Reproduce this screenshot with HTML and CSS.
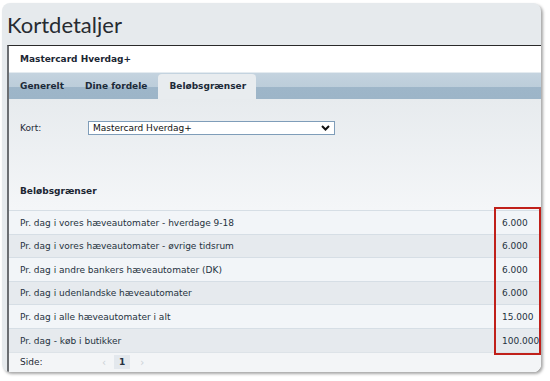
FILE: index.html
```html
<!DOCTYPE html>
<html lang="da">

<head>
    <meta charset="UTF-8" />
    <title>Kortdetaljer</title>
    <link rel="stylesheet" href="styles.css">
</head>

<body>
    <div class="panel">
        <h1 class="page-title">Kortdetaljer</h1>
        <div class="box">
            <div class="box-head">Mastercard Hverdag+</div>
            <ul class="tabs">
                <li>Generelt</li>
                <li>Dine fordele</li>
                <li class="active">Beløbsgrænser</li>
            </ul>
            <div class="content">
                <div class="form-row">
                    <label>Kort:</label>
                    <div class="select">
                        <span>Mastercard Hverdag+</span>
                        <svg width="9" height="6" viewBox="0 0 9 6">
                            <path d="M1 1 L4.5 4.5 L8 1" fill="none" stroke="#111" stroke-width="2" />
                        </svg>
                    </div>
                </div>
                <h3 class="section">Beløbsgrænser</h3>
                <div class="limits">
                    <table>
                        <tr><td>Pr. dag i vores hæveautomater - hverdage 9-18</td><td class="num">6.000</td></tr>
                        <tr><td>Pr. dag i vores hæveautomater - øvrige tidsrum</td><td class="num">6.000</td></tr>
                        <tr><td>Pr. dag i andre bankers hæveautomater (DK)</td><td class="num">6.000</td></tr>
                        <tr><td>Pr. dag i udenlandske hæveautomater</td><td class="num">6.000</td></tr>
                        <tr><td>Pr. dag i alle hæveautomater i alt</td><td class="num">15.000</td></tr>
                        <tr><td>Pr. dag - køb i butikker</td><td class="num">100.000</td></tr>
                    </table>
                    <div class="highlight"></div>
                </div>
                <div class="pager">
                    <span class="pager-label">Side:</span>
                    <span class="arrow">&lsaquo;</span>
                    <span class="page">1</span>
                    <span class="arrow">&rsaquo;</span>
                </div>
            </div>
        </div>
    </div>
</body>

</html>
```

FILE: styles.css
```css
* {
    box-sizing: border-box;
    margin: 0;
    padding: 0;
}

body {
    background: #fff;
    font-family: "DejaVu Sans", Verdana, sans-serif;
    font-size: 9px;
    color: #1e2a36;
}

.panel {
    position: absolute;
    left: 2px;
    top: 3px;
    width: 539px;
    height: 369px;
    background: #e6eaed;
    border-radius: 8px;
    box-shadow: 2px 2px 3px rgba(0, 0, 0, 0.35);
    overflow: hidden;
    padding-left: 5px;
}

.page-title {
    font-family: "Lato", "Open Sans", sans-serif;
    font-weight: 400;
    font-size: 22px;
    line-height: 24px;
    color: #262b31;
    padding-top: 10px;
    height: 42px;
}

.box {
    border-top: 1px solid #2a2a2a;
    border-left: 2px solid #6b6e72;
    background: #fff;
    height: 330px;
}

.box-head {
    height: 26px;
    line-height: 26px;
    padding-left: 11px;
    font-weight: bold;
    color: #1b2633;
    background: #fff;
}

.tabs {
    display: flex;
    list-style: none;
    height: 27px;
    border-top: 1px solid #e4ebf0;
    background: linear-gradient(#c4d3df 0, #bccdda 14px, #9eb6c9 14px, #9db5c8 100%);
    padding-left: 11px;
}

.tabs li {
    font-weight: bold;
    color: #1c2a38;
    line-height: 26px;
    margin-right: 21px;
}

.tabs li.active {
    margin-left: -10px;
    margin-top: 1px;
    padding: 0 10px 0 11px;
    background: #e8ecef;
    border-radius: 4px 4px 0 0;
    line-height: 24px;
}

.content {
    background: linear-gradient(#e7ebee, #f4f6f8 110px, #f4f6f8);
    height: 276px;
    padding-top: 22px;
}

.form-row {
    display: flex;
    align-items: center;
    padding-left: 11px;
    height: 14px;
}

.form-row label {
    width: 68px;
}

.select {
    width: 247px;
    height: 14px;
    border: 1px solid #7f9db9;
    background: #fff;
    display: flex;
    align-items: center;
    justify-content: space-between;
    padding: 0 4px;
    color: #111;
}

.section {
    font-size: 9px;
    font-weight: bold;
    padding-left: 11px;
    margin-top: 51px;
    color: #1b2633;
}

.limits {
    position: relative;
    margin-top: 14px;
}

table {
    width: 100%;
    border-collapse: collapse;
}

td {
    height: 23.5px;
    padding-left: 11px;
    padding-top: 1px;
    border-top: 1px solid #d6dee5;
    color: #253240;
}

tr:nth-child(odd) td {
    background: #f2f5f8;
}

tr:nth-child(even) td {
    background: #e6eaee;
}

td.num {
    width: 47px;
    padding-left: 8px;
}

.highlight {
    position: absolute;
    right: 0;
    top: -3px;
    width: 47px;
    height: 148px;
    border: 2px solid #c0201a;
}

.pager {
    display: flex;
    align-items: center;
    height: 20px;
    border-top: 1px solid #dde3e8;
    padding-left: 11px;
    background: #f3f5f7;
}

.pager-label {
    width: 82px;
}

.arrow {
    color: #c9d0d6;
    font-size: 10px;
}

.page {
    margin: 0 10px 0 8px;
    background: #e3e8ed;
    padding: 2px 5px;
    font-weight: bold;
    color: #253240;
}
```
